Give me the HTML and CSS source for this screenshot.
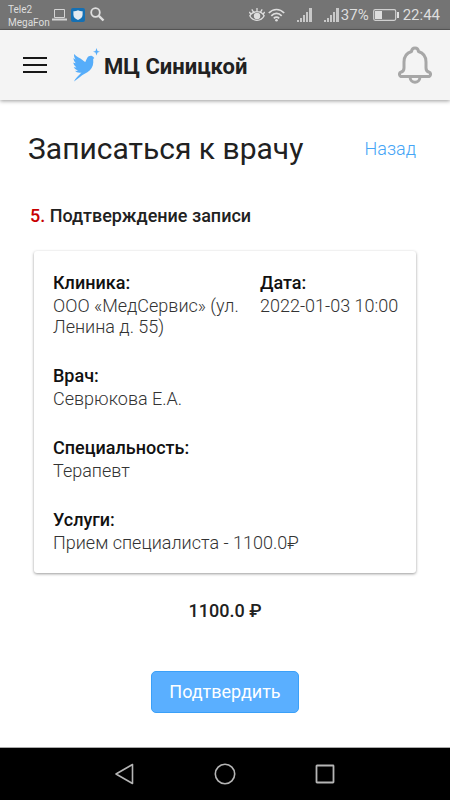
FILE: index.html
```html
<!DOCTYPE html>
<html lang="ru">
<head>
<meta charset="utf-8">
<meta name="viewport" content="width=device-width, initial-scale=1">
<title>МЦ Синицкой</title>
<link rel="stylesheet" href="styles.css">
</head>
<body>
<div class="status">
  <div class="status-group">
    <div class="carriers"><span>Tele2</span><span>MegaFon</span></div>
    <svg class="ic-laptop" width="15" height="12" viewBox="0 0 15 12" fill="none" stroke="#d4d4d4"><path d="M2.5 8.5v-8h10v8z"/><path d="M0 10.5h15" stroke-width="2"/></svg>
    <svg class="ic-shield" width="14" height="14" viewBox="0 0 14 14"><rect width="14" height="14" rx="2" fill="#1570b4"/><path d="M7 2.2c1.500.8 3 1 4.600 1v3.600c0 2.500-2 4.300-4.600 5.200-2.600-.9-4.600-2.700-4.600-5.200V3.200C4 3.200 5.500 3 7 2.200z" fill="#e4eaf0"/></svg>
    <svg width="15" height="15" viewBox="0 0 15 15" fill="none" stroke="#dedede"><circle cx="5.500" cy="5.500" r="4.300" stroke-width="1.800"/><path d="M8.800 8.800l4.700 4.700" stroke-width="2.400"/></svg>
  </div>
  <div class="status-group">
    <svg class="ic-eye" width="16" height="15" viewBox="0 0 16 15" fill="none" stroke="#dedede" stroke-width="1.300"><path d="M.8 8.800C4 3.300 12 3.300 15.200 8.800 12 14.800 4 14.800.8 8.800zM8 4.500V1M4.500 5.200L2.800 2.300M11.500 5.200l1.700-2.900M1.800 7L.3 5M14.200 7l1.500-2"/><circle cx="8" cy="9" r="2.600" fill="#dedede"/></svg>
    <svg class="ic-wifi" width="17" height="14" viewBox="0 0 17 14" fill="none" stroke="#dedede" stroke-width="1.700"><path d="M.8 5c4.500-4.700 10.900-4.700 15.400 0M3.300 7.800c3-3.200 7.400-3.200 10.400 0M5.800 10.300c1.600-1.600 3.800-1.600 5.400 0"/><circle cx="8.500" cy="12.300" r="1.300" fill="#dedede" stroke="none"/></svg>
    <svg class="ic-signal" width="15" height="14" viewBox="0 0 15 14" fill="#c8c8c8"><path d="M0 12h2v2H0zM3 10h2v4H3zM6 7h2v7H6zM9 4h2v10H9zM12 0h3v14h-3z"/></svg>
    <svg width="15" height="14" viewBox="0 0 15 14" fill="#c8c8c8"><path d="M0 12h2v2H0zM3 10h2v4H3zM6 7h2v7H6zM9 4h2v10H9zM12 0h3v14h-3z"/></svg>
    <span class="battery-level">37%</span>
    <svg class="ic-battery" width="26" height="12" viewBox="0 0 26 12"><rect x=".7" y=".7" width="22" height="10.600" rx="1.500" fill="none" stroke="#d0d0d0" stroke-width="1.200"/><path d="M2 2h7v8H2zM24 3h2v6h-2z" fill="#dedede"/></svg>
    <span class="clock">22:44</span>
  </div>
</div>
<header class="header">
  <button class="icon-button menu" aria-label="Меню"><svg width="24" height="16" viewBox="0 0 24 16" fill="#171717"><path d="M0 0h24v2H0zM0 7h24v2H0zM0 14h24v2H0z"/></svg></button>
  <a class="brand" href="#">
    <svg width="28" height="34" viewBox="0 0 28 34" fill="#56adfa"><path d="M2.200 6C4 8.700 8 9.800 10.500 12c1.200 1 2 1.800 2.900 2 .2-1.400 1.200-2.600 1.800-4 .8-2 3.300-2.600 4.800-2.100 1.300.4 1.600 1.300 2.300 2.100l-1.100 1.100c.5 5-.5 8.400-3.300 11.200-3.200 3-7.400 4.300-9.900 6.700L2 33.500c1-3 4.800-5.800 7.500-8.900-2.700.5-5.300-.1-6.500-1.800 1.200.2 2.400 0 3-.4-2.300-.5-3.800-1.700-4.200-3.300.8.4 1.900.4 2.700.2-2-1.300-3-3-3.200-4.800.7.600 1.700.8 2.500.8-1.500-1.700-2.400-3.500-2.300-5.300.6.800 1.500 1.200 2.200 1.400C2.300 9.800 1.700 8 2.200 6z"/><path d="M24.500 0l1 3 2.500.7-2.500.7-1 3-1-3-2.500-.7 2.500-.7z"/></svg>
    <span class="brand-name">МЦ Синицкой</span>
  </a>
  <button class="icon-button bell" aria-label="Уведомления"><svg width="34" height="38" viewBox="0 0 34 38" fill="none" stroke="#a7a7a7" stroke-width="3" stroke-linejoin="round"><path d="M13.500 5.500C14 .9 20 .9 20.500 5.500 26 7.200 28 11.200 28 16v6c0 2.200 1 3.700 3.200 4.200 2 .8 1.800 4.300-1.200 4.300H4c-3 0-3.200-3.500-1.200-4.300C5 25.700 6 24.200 6 22v-6c0-4.800 2-8.800 7.500-10.500zM12 31c.5 7 9.500 7 10 0"/></svg></button>
</header>
<main class="content">
  <div class="heading">
    <h1>Записаться к врачу</h1>
    <a class="back" href="#">Назад</a>
  </div>
  <h2 class="step"><span class="step-number">5.</span> Подтверждение записи</h2>
  <dl class="card">
    <div><dt>Клиника:</dt><dd>ООО «МедСервис» (ул. Ленина д. 55)</dd></div>
    <div><dt>Дата:</dt><dd>2022-01-03 10:00</dd></div>
    <div class="wide"><dt>Врач:</dt><dd>Севрюкова Е.А.</dd></div>
    <div class="wide"><dt>Специальность:</dt><dd>Терапевт</dd></div>
    <div class="wide"><dt>Услуги:</dt><dd>Прием специалиста - 1100.0₽</dd></div>
  </dl>
  <p class="total">1100.0 ₽</p>
  <button class="confirm">Подтвердить</button>
</main>
<nav class="system-nav">
  <button class="icon-button" aria-label="Назад"><svg width="22" height="22" viewBox="0 0 22 22" fill="none" stroke="#b5b5b5" stroke-width="1.600" stroke-linejoin="round"><path d="M18.500 1.500v19L2 11z"/></svg></button>
  <button class="icon-button" aria-label="Домой"><svg width="22" height="22" viewBox="0 0 22 22" fill="none" stroke="#b5b5b5" stroke-width="1.600"><circle cx="11" cy="11" r="9.700"/></svg></button>
  <button class="icon-button" aria-label="Недавние"><svg width="22" height="22" viewBox="0 0 22 22" fill="none" stroke="#b5b5b5" stroke-width="1.800"><rect x="2.500" y="2.500" width="17" height="17" rx=".5"/></svg></button>
</nav>
</body>
</html>
```

FILE: styles.css
```css
* { box-sizing: border-box; }
body {
  margin: 0;
  min-height: 100vh;
  display: flex;
  flex-direction: column;
  background: #fff;
  color: #212121;
  font-family: Roboto, "Liberation Sans", sans-serif;
  font-size: 18px;
  line-height: 20px;
}
a { text-decoration: none; }
.icon-button { padding: 0; border: 0; background: none; }
.icon-button svg { display: block; }

.status {
  display: flex;
  flex: none;
  justify-content: space-between;
  height: 30px;
  padding: 0 10px 0 8px;
  background: #747474;
  border-bottom: 1px solid #5c5c5c;
  color: #dedede;
}
.status-group { display: flex; align-items: center; }
.carriers { display: flex; flex-direction: column; padding-top: 2px; font-size: 10px; line-height: 13px; }
.ic-laptop { margin: 0 4px 0 2px; }
.ic-shield { margin-right: 5px; }
.ic-eye { margin-right: 3px; }
.ic-wifi { margin-right: 12px; }
.ic-signal { margin-right: 12px; }
.battery-level { margin: 0 4px 0 2px; font-size: 15px; }
.ic-battery { margin-right: 4px; }
.clock { font-size: 15px; }

.header {
  display: flex;
  flex: none;
  align-items: center;
  height: 70px;
  padding: 0 18px 0 23px;
  background: #f4f4f4;
  box-shadow: 0 1px 4px rgba(0, 0, 0, .4);
}
.brand {
  display: flex;
  align-items: center;
  gap: 4px;
  margin-left: 25px;
  color: #212121;
  font-size: 22px;
  font-weight: 700;
  line-height: 30px;
}
.brand-name { padding-top: 4px; }
.bell { margin-left: auto; }

.content {
  flex: 1;
  display: flex;
  flex-direction: column;
  padding: 28px 34px 34px;
}
.heading {
  display: flex;
  align-items: center;
  justify-content: space-between;
  margin-left: -6px;
}
h1 { margin: 0; font-size: 30px; font-weight: 400; line-height: 42px; }
.back { color: #45a5f6; font-weight: 300; }
.step { margin: 35px 0 0 -4px; font-size: 18px; font-weight: 500; line-height: 22px; }
.step-number { color: #c80000; }
.card {
  display: grid;
  grid-template-columns: 187px 1fr;
  gap: 26px 20px;
  margin: 24px 0 0;
  padding: 19px 16px 20px 19px;
  border-radius: 3px;
  box-shadow: 0 1px 3px rgba(0, 0, 0, .4);
}
.wide { grid-column: 1 / -1; }
dt { color: #111; font-size: 18px; font-weight: 500; line-height: 25px; }
dd { margin: 0; color: #333; font-weight: 300; line-height: 21px; }
.total { margin: 27px 0 0; font-size: 18px; font-weight: 500; line-height: 22px; text-align: center; }
.confirm {
  align-self: center;
  margin-top: 49px;
  padding: 10px 17px;
  border: 1px solid #3ba0f8;
  border-radius: 5px;
  background: #5aafff;
  color: #fff;
  font: 400 18px/20px Roboto, "Liberation Sans", sans-serif;
}

.system-nav {
  display: flex;
  flex: none;
  align-items: center;
  justify-content: center;
  gap: 78px;
  height: 53px;
  background: #000;
  border-top: 1px solid #aaa;
}
```
